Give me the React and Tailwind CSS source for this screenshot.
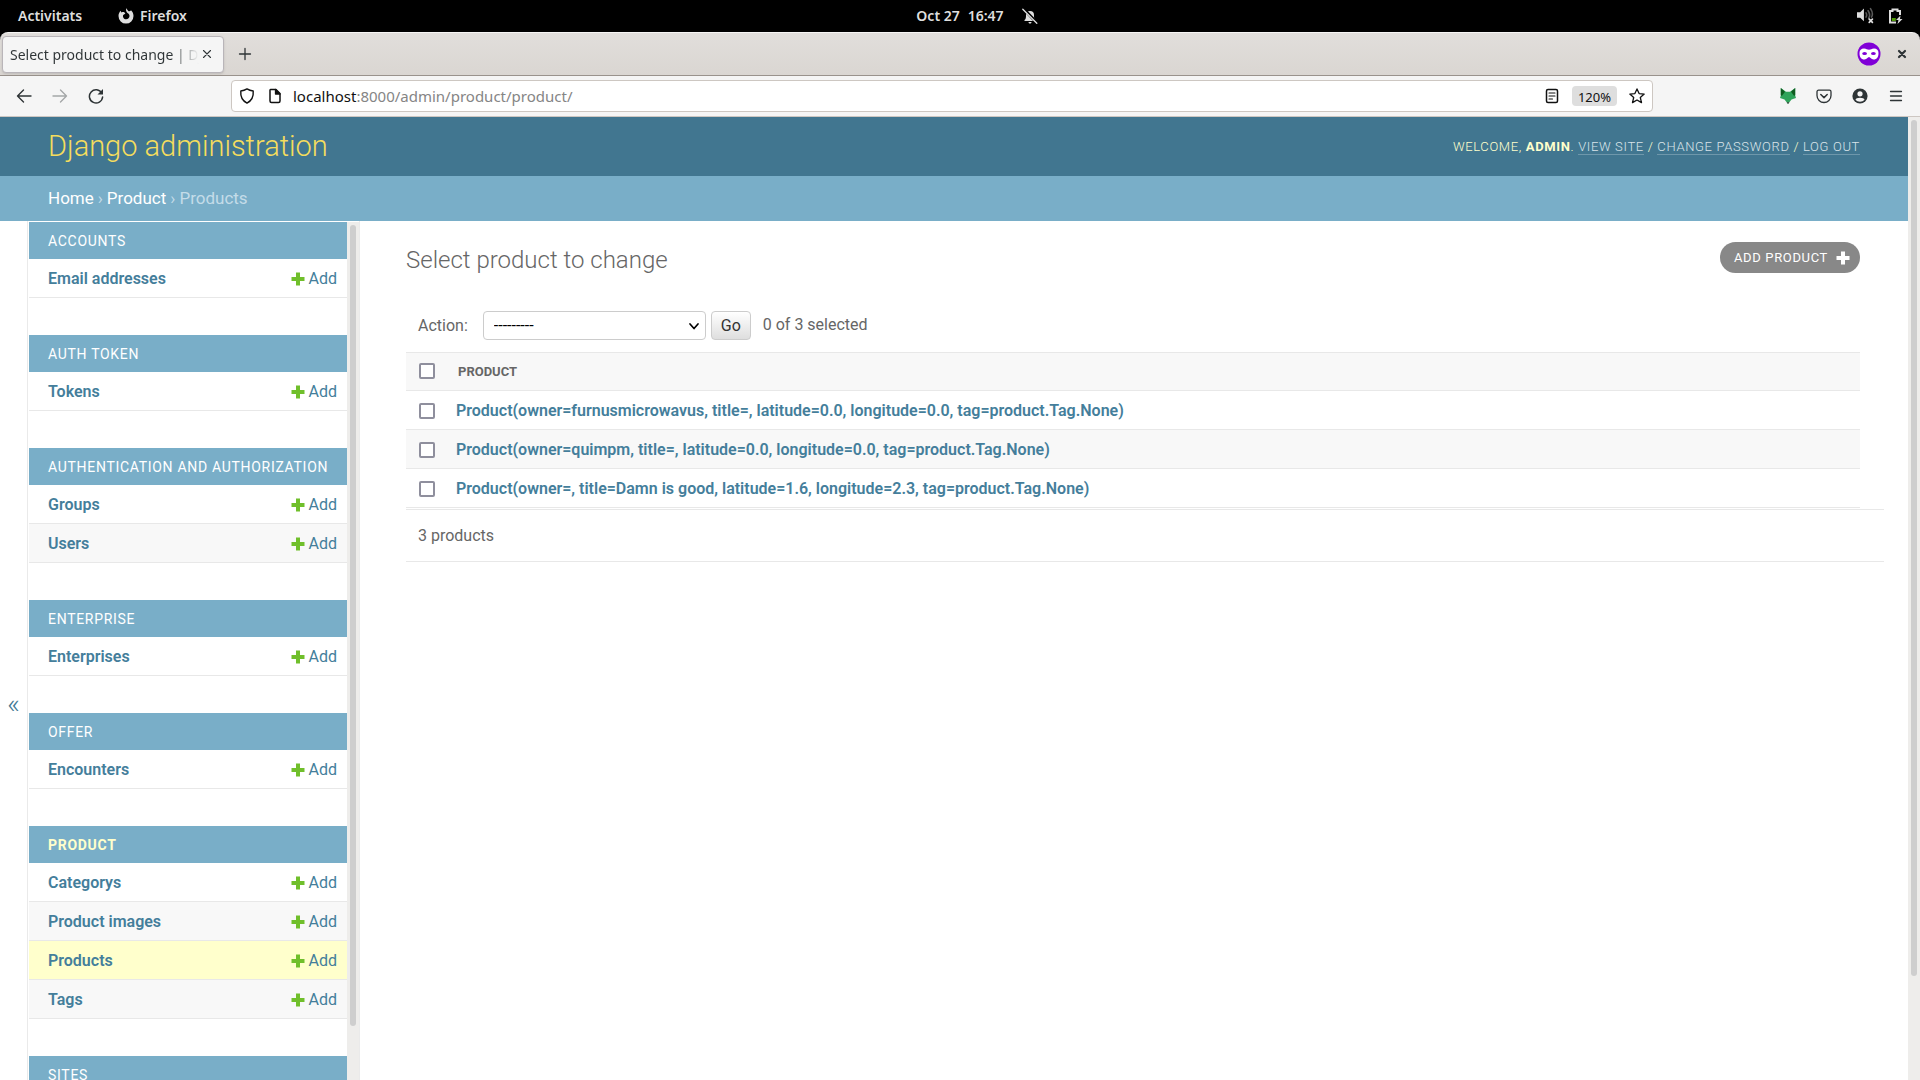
import React from "react";

const sections = [
  { name: "Accounts", models: ["Email addresses"] },
  { name: "Auth Token", models: ["Tokens"] },
  { name: "Authentication and Authorization", models: ["Groups", "Users"] },
  { name: "Enterprise", models: ["Enterprises"] },
  { name: "Offer", models: ["Encounters"] },
  { name: "Product", models: ["Categorys", "Product images", "Products", "Tags"], current: true },
  { name: "Sites", models: [] },
];

const products = [
  "Product(owner=furnusmicrowavus, title=, latitude=0.0, longitude=0.0, tag=product.Tag.None)",
  "Product(owner=quimpm, title=, latitude=0.0, longitude=0.0, tag=product.Tag.None)",
  "Product(owner=, title=Damn is good, latitude=1.6, longitude=2.3, tag=product.Tag.None)",
];

function Icon({ className, size = 16, box = 16, children }) {
  return (
    <svg
      className={className}
      width={size}
      height={size}
      viewBox={`0 0 ${box} ${box}`}
      fill="none"
      stroke="currentColor"
      strokeWidth="1.3"
      strokeLinecap="round"
      strokeLinejoin="round"
      aria-hidden="true"
    >
      {children}
    </svg>
  );
}

function IconButton({ label, className = "", children }) {
  return (
    <button type="button" aria-label={label} className={"flex h-8 w-9 shrink-0 items-center justify-center " + className}>
      {children}
    </button>
  );
}

function SystemBar() {
  return (
    <div className="grid h-8 shrink-0 grid-cols-3 items-center bg-black pr-4 pb-px pl-[18px] text-[14px] font-semibold text-[#dedede]">
      <div className="flex items-center">
        <span className="w-[100px]">Activitats</span>
        <Icon size={16}>
          <path
            d="M8.500 0c.2 1.500 1.300 2.200 2 3.200C11.500 3.300 12.500 3 13 2.200c1.600 1.500 2.500 3.500 2.500 5.900A7.500 7.500 0 0 1 .5 8.100C.5 6 1.300 4 2.800 2.700c0 .9.300 1.500.8 1.800C4.300 4 5.200 3.900 6 4.100L7.400 5.500 5.200 7c-.8 1.800.6 4.300 2.900 4.300 2 0 3.400-1.400 3.400-3.300 0-1.500-.8-2.600-2-3.100C8.200 4 7.500 2 8.500 0z"
            fill="currentColor"
            stroke="none"
          />
        </Icon>
        <span className="pl-1.5">Firefox</span>
      </div>
      <div className="flex items-center justify-center pl-8">
        <time className="flex gap-2">
          <span>Oct 27</span>
          <span>16:47</span>
        </time>
        <Icon size={16} className="ml-[18px]">
          <path d="M2.500 13V12c1.500-1 1.500-2.500 1.500-5a4 4 0 0 1 8 0c0 2.500 0 4 1.500 5v1zM6.500 14h3c0 2-3 2-3 0z" fill="currentColor" stroke="none" />
          <path d="M1.500.8 15 15" stroke="#000" strokeWidth="3" />
          <path d="M.8 1.200 14.800 15.200" strokeWidth="1.300" />
        </Icon>
      </div>
      <div className="flex items-center justify-end gap-3.5">
        <Icon size={17}>
          <path d="M0 5h3l3.500-3.500v12L3 10H0z" fill="currentColor" stroke="none" />
          <path d="M8.500 5.500q1.200 2 0 4M10.500 3.500q2.500 4 .5 7M12.700 1.500q3 4.500 1 8" stroke="#5a5a5a" strokeWidth="1.500" />
          <path d="M11.500 11.500l3 3m0-3-3 3" strokeWidth="1.600" />
        </Icon>
        <Icon size={16}>
          <path d="M8 14.500H2V3h2.500V1.500h5V3H12v4" strokeWidth="2" strokeLinejoin="miter" strokeLinecap="butt" />
          <path d="M3.800 10h4v3h-4z" fill="#4e9a06" stroke="none" />
          <path d="M12.500 7.500 8 12h2.500l-1 4 5-5H12z" fill="currentColor" stroke="none" />
        </Icon>
      </div>
    </div>
  );
}

function TabStrip() {
  return (
    <div className="bg-black">
      <div className="flex h-11 items-center rounded-t-lg border-t border-b border-t-[#f6f5f4] border-b-[#99928c] bg-linear-to-b from-[#e1dedb] to-[#dad6d2]">
        <div className="ml-0.5 flex h-[37px] w-[222px] items-center rounded border border-[#b9b5b9] bg-[#f5f5f5] pl-[7px] shadow-sm">
          <span className="w-[189px] overflow-hidden bg-linear-to-r from-[#2e3436] from-85% to-transparent to-100% bg-clip-text text-[14px] whitespace-nowrap text-transparent">
            Select product to change | Django site admin
          </span>
          <button type="button" aria-label="Close tab" className="text-[#2e3436]">
            <Icon size={16}>
              <path d="M4.500 4.500l7 7m0-7-7 7" strokeWidth="1.100" />
            </Icon>
          </button>
        </div>
        <IconButton label="New tab" className="ml-[3px] text-[#2e3436]">
          <Icon size={16}>
            <path d="M8 2.500v11M2.500 8h11" />
          </Icon>
        </IconButton>
        <div className="ml-auto flex items-center pr-2.5">
          <svg width="24" height="24" viewBox="0 0 24 24" role="img" aria-label="Private browsing">
            <circle cx="12" cy="12" r="11.500" fill="#8000d7" />
            <path
              d="M2.500 11c0-3 1.700-4.500 4.500-4.500 2.500 0 3 1.300 5 1.300s2.500-1.300 5-1.300c2.800 0 4.500 1.500 4.500 4.500 0 4-1.500 6.500-5 6.500-2.500 0-3-2.500-4.500-2.500s-2 2.500-4.500 2.500c-3.500 0-5-2.500-5-6.500z"
              fill="#fff"
            />
            <ellipse cx="7.600" cy="11.500" rx="2.400" ry="1.500" fill="#8000d7" />
            <ellipse cx="16.400" cy="11.500" rx="2.400" ry="1.500" fill="#8000d7" />
          </svg>
          <button type="button" aria-label="Close window" className="ml-[13px] text-[#2e3436]">
            <Icon size={16}>
              <path d="M5 5l6 6m0-6-6 6" strokeWidth="2.200" />
            </Icon>
          </button>
        </div>
      </div>
    </div>
  );
}

function Toolbar() {
  return (
    <div className="flex h-[41px] shrink-0 items-center border-b border-[#cdc7c2] bg-[#f5f5f5] px-1.5 text-[#2e3436]">
      <IconButton label="Back">
        <Icon size={16}>
          <path d="M15 8H1.500M7.500 2 1.500 8l6 6" strokeWidth="1.400" />
        </Icon>
      </IconButton>
      <IconButton label="Forward" className="opacity-40">
        <Icon size={16}>
          <path d="M1 8h13.500M8.500 2l6 6-6 6" strokeWidth="1.400" />
        </Icon>
      </IconButton>
      <IconButton label="Reload">
        <Icon size={16}>
          <path d="M13.800 5.200A6.600 6.600 0 1 0 14.600 9" strokeWidth="1.500" />
          <path d="M15 1v5.500H9.500z" fill="currentColor" stroke="none" />
        </Icon>
      </IconButton>
      <div className="ml-[117px] flex h-8 min-w-0 flex-1 items-center rounded border border-[#cdc7c2] bg-white pr-[7px]">
        <Icon size={16} className="ml-[7px] text-[#111]">
          <path d="M8 .9c2 1.300 4 1.900 6.200 2.100.5 5.500-1.700 9.800-6.200 12.100C3.500 12.800 1.300 8.500 1.800 3 4 2.800 6 2.200 8 .9z" strokeWidth="1.400" />
        </Icon>
        <Icon size={16} className="ml-3 text-[#111]">
          <path d="M3.500 1.500h5.500l4 4v7.500a1.500 1.500 0 0 1-1.500 1.500h-7A1.500 1.500 0 0 1 3 13V2z" strokeWidth="1.500" />
          <path d="M8.500 1.500v4.500h4.500z" fill="currentColor" />
        </Icon>
        <div className="ml-2.5 flex-1 truncate text-[15px] text-[#858585]">
          <span className="text-[#111]">localhost</span>:8000/admin/product/product/
        </div>
        <button type="button" aria-label="Reader view" className="text-[#111]">
          <Icon size={16}>
            <rect x="2.500" y="1.500" width="11" height="13" rx="1.500" strokeWidth="1.500" />
            <path d="M5 5h6M5 8h6M5 11h3.500" strokeWidth="1.100" />
          </Icon>
        </button>
        <button type="button" className="ml-3 h-5 w-[45px] rounded bg-[#dedede] pt-px text-[13px] leading-5 text-[#111]">
          120%
        </button>
        <button type="button" aria-label="Bookmark" className="ml-3 text-[#111]">
          <Icon size={16}>
            <path d="M8 .9l2.100 4.700 5.100.5-3.900 3.400 1.200 5.100L8 12l-4.500 2.600 1.200-5.100L.8 6.100l5.100-.5z" />
          </Icon>
        </button>
      </div>
      <div className="ml-[117px] flex">
        <IconButton label="Extension">
          <svg width="16" height="16" viewBox="0 0 16 16" aria-hidden="true">
            <path d="M.8 0 6 3.800h4L15.200 0v7.500l.8 2.500-4.500 1.500L8 16l-3.500-4.500L0 10l.8-2.500z" fill="#2fa35a" />
            <path d="M.8 0 5 3.800 1.800 8 .8 7zM15.200 0 11 3.800 14.200 8l1-1z" fill="#0f5c20" />
            <path d="M6.600 14.200h2.800L8 16z" fill="#444" />
          </svg>
        </IconButton>
        <IconButton label="Pocket">
          <Icon size={16}>
            <path d="M2.500 2.200h11a1.500 1.500 0 0 1 1.500 1.500V7.500a7 7 0 0 1-14 0V3.700a1.500 1.500 0 0 1 1.500-1.500z" />
            <path d="M4.800 6.500 8 9.600l3.200-3.100" strokeWidth="1.500" />
          </Icon>
        </IconButton>
        <IconButton label="Account">
          <Icon size={16}>
            <circle cx="8" cy="8" r="7.600" fill="currentColor" stroke="none" />
            <circle cx="8" cy="5.800" r="2.600" fill="#f5f5f5" stroke="none" />
            <path d="M3.500 11.800c0-1.400 2-2.100 4.500-2.100s4.500.7 4.500 2.100c-1 1.300-2.700 1.900-4.500 1.900s-3.500-.6-4.500-1.900z" fill="#f5f5f5" stroke="none" />
          </Icon>
        </IconButton>
        <IconButton label="Menu">
          <Icon size={16}>
            <path d="M2.500 3.500h11M2.500 8h11M2.500 12.500h11" />
          </Icon>
        </IconButton>
      </div>
    </div>
  );
}

function Plus({ className }) {
  return (
    <svg className={className} width="14" height="14" viewBox="0 0 14 14" fill="currentColor" aria-hidden="true">
      <path d="M5 .5h4V5h4.500v4H9v4.500H5V9H.5V5H5z" />
    </svg>
  );
}

function HeaderLink({ children }) {
  return (
    <a href="#" className="border-b border-[#6e97ab] text-[#d9e4e9]">
      {children}
    </a>
  );
}

function Sidebar() {
  return (
    <div className="flex min-h-0 shrink-0">
      <button
        type="button"
        aria-label="Toggle navigation"
        className="flex w-[27px] items-center justify-center pt-[106px] text-[28px] font-light text-[#417893]"
      >
        «
      </button>
      <nav aria-label="Applications" className="flex border-x border-[#eaeaea] pt-px pl-px">
        <div className="w-[318px] overflow-hidden">
          {sections.map((s) => (
            <section key={s.name} className="mb-[37px]">
              <h2
                className={
                  "flex h-[37px] items-center bg-[#79aec8] pt-px pl-[19px] text-[14px] tracking-wider uppercase " +
                  (s.current ? "font-bold text-[#ffc]" : "text-white")
                }
              >
                <a href="#">{s.name}</a>
              </h2>
              <ul>
                {s.models.map((m, i) => (
                  <li
                    key={m}
                    className={
                      "flex h-[39px] items-center justify-between border-b border-[#e8e8e8] pt-px pr-2.5 pl-[19px] " +
                      (m === "Products" ? "bg-[#ffc]" : i % 2 ? "bg-[#f8f8f8]" : "bg-white")
                    }
                  >
                    <a href="#" className="font-semibold text-[#447e9b]">
                      {m}
                    </a>
                    <a href="#" className="flex items-center gap-1 text-[#447e9b]">
                      <Plus className="text-[#70bf2b]" />
                      Add
                    </a>
                  </li>
                ))}
              </ul>
            </section>
          ))}
        </div>
        <div className="flex w-3 justify-center bg-[#eeedeb] pt-[3px]">
          <div className="h-[801px] w-1.5 rounded-full bg-[#cecece]" />
        </div>
      </nav>
    </div>
  );
}

function Check({ label }) {
  return (
    <input
      type="checkbox"
      aria-label={label}
      className="block h-4 w-4 appearance-none rounded-xs border-2 border-[#8f8f9d] bg-white"
    />
  );
}

function ChangeList() {
  return (
    <main className="min-w-0 flex-1 pt-5 pr-6 pl-[46px]">
      <div className="flex justify-between pr-6">
        <h1 className="pt-px text-2xl leading-9 font-light text-[#666]">Select product to change</h1>
        <a
          href="#"
          className="mt-px flex h-[31px] items-center gap-2 rounded-full bg-[#888] pr-2.5 pl-3.5 text-[13px] tracking-wider text-white uppercase"
        >
          Add product
          <Plus />
        </a>
      </div>
      <form className="mt-[33px] flex h-[29px] items-center pl-3 text-[#666]" onSubmit={(e) => e.preventDefault()}>
        <label htmlFor="action">Action:</label>
        <div className="relative ml-[15px] text-black">
          <select id="action" className="block h-[29px] w-[223px] appearance-none rounded border border-[#ccc] bg-white pl-2.5">
            <option>---------</option>
          </select>
          <Icon size={16} className="pointer-events-none absolute top-[7px] right-1">
            <path d="M4 6l4 4.500L12 6" strokeWidth="1.700" />
          </Icon>
        </div>
        <button
          type="submit"
          className="ml-[5px] h-[29px] w-10 rounded border border-[#ccc] bg-linear-to-b from-white to-[#dedede] text-[#333]"
        >
          Go
        </button>
        <span className="ml-3 pb-0.5">0 of 3 selected</span>
      </form>
      <div className="pt-3 pr-6">
        <table className="w-full border-separate border-spacing-0 text-left">
          <thead>
            <tr className="bg-[#f8f8f8]">
              <th className="h-[39px] w-[50px] border-y border-[#e8e8e8] pb-0.5 pl-[13px]">
                <Check label="Select all products" />
              </th>
              <th className="border-y border-[#e8e8e8] pl-0.5 text-[13px] font-bold text-[#666] uppercase">Product</th>
            </tr>
          </thead>
          <tbody>
            {products.map((p, i) => (
              <tr key={p} className={i % 2 ? "bg-[#f8f8f8]" : "bg-white"}>
                <td className="h-[39px] border-b border-[#e8e8e8] pt-px pl-[13px]">
                  <Check label={p} />
                </td>
                <td className="border-b border-[#e8e8e8] pt-0.5">
                  <a href="#" className="font-semibold text-[#447e9b]">
                    {p}
                  </a>
                </td>
              </tr>
            ))}
          </tbody>
        </table>
      </div>
      <p className="mt-px flex h-[53px] items-center border-y border-[#e8e8e8] pl-3 text-[#666]">3 products</p>
    </main>
  );
}

function AdminPage() {
  return (
    <div className="flex min-h-0 flex-1 bg-white font-[Roboto,sans-serif] text-[16px]">
      <div className="flex min-w-0 flex-1 flex-col">
        <header className="flex h-[59px] shrink-0 items-center justify-between bg-[#417690] px-12">
          <a href="#" className="text-[29px] font-light text-[#f5dd5d]">
            Django administration
          </a>
          <div className="text-[13px] font-light tracking-wider text-[#ffc] uppercase">
            Welcome, <strong className="font-bold">admin</strong>. <HeaderLink>View site</HeaderLink> /{" "}
            <HeaderLink>Change password</HeaderLink> / <HeaderLink>Log out</HeaderLink>
          </div>
        </header>
        <div className="flex h-[45px] shrink-0 items-center gap-1 bg-[#79aec8] px-12 text-[17px] text-[#c4dce8]">
          <a href="#" className="text-white">
            Home
          </a>
          <span>›</span>
          <a href="#" className="text-white">
            Product
          </a>
          <span>›</span>
          <span>Products</span>
        </div>
        <div className="flex min-h-0 flex-1">
          <Sidebar />
          <ChangeList />
        </div>
      </div>
      <div className="flex w-3 shrink-0 justify-center bg-[#eeedeb] pt-[3px]">
        <div className="h-[856px] w-1.5 rounded-full bg-[#cecece]" />
      </div>
    </div>
  );
}

export default function App() {
  return (
    <div className="flex h-screen flex-col overflow-hidden font-['Noto_Sans',sans-serif]">
      <SystemBar />
      <TabStrip />
      <Toolbar />
      <AdminPage />
    </div>
  );
}
